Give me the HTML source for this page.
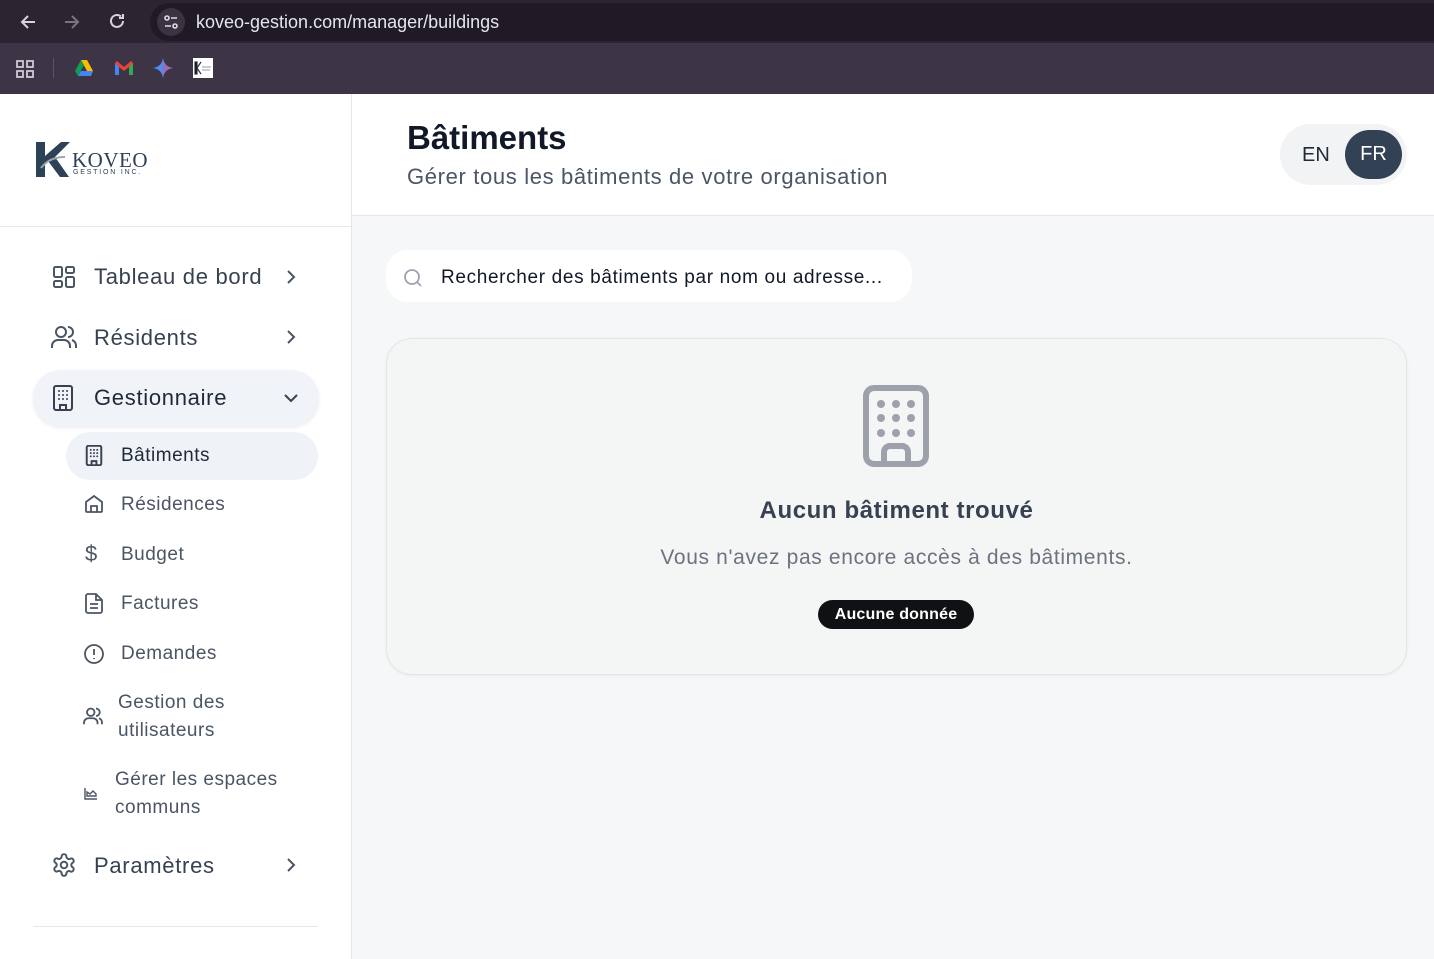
<!DOCTYPE html>
<html><head><meta charset="utf-8"><style>
*{box-sizing:border-box;margin:0;padding:0}
body{width:1434px;height:959px;overflow:hidden;font-family:"Liberation Sans",Arial,sans-serif;background:#f6f7f8;position:relative;letter-spacing:0.5px}
.abs{position:absolute}
.top{left:0;top:0;width:1434px;height:43px;background:#2b2431}
.bm{left:0;top:43px;width:1434px;height:51px;background:#3d3546}
.url{left:150px;top:3px;width:1300px;height:38px;border-radius:19px;background:#1f1a25;color:#e8e4ee;font-size:18px;line-height:38px;padding-left:46px;letter-spacing:0}
.side{left:0;top:94px;width:352px;height:865px;background:#fff;border-right:1px solid #e5e7eb}
.nav{color:#374151;font-size:22px;letter-spacing:0.7px}
.sub{color:#4b5563;font-size:19px}
svg{position:absolute}
</style></head><body>
<div class="abs top"></div>
<div class="abs bm"></div>
<svg style="left:18px;top:12px" width="20" height="20" viewBox="0 0 20 20" fill="none" stroke="#d8d2de" stroke-width="2"><path d="M17 10H4M10 4L4 10l6 6"/></svg>
<svg style="left:62px;top:12px" width="20" height="20" viewBox="0 0 20 20" fill="none" stroke="#7b7382" stroke-width="2"><path d="M3 10h13M10 4l6 6-6 6"/></svg>
<svg style="left:107px;top:11px" width="20" height="20" viewBox="0 0 20 20" fill="none" stroke="#d8d2de" stroke-width="2"><path d="M16 10a6 6 0 1 1-2-4.5M16 3v4h-4"/></svg>
<div class="abs url">koveo-gestion.com/manager/buildings</div>
<div class="abs" style="left:157px;top:8px;width:28px;height:28px;border-radius:14px;background:#3a3342"></div>
<svg style="left:162px;top:13px" width="18" height="18" viewBox="0 0 18 18" fill="none" stroke="#e0dae6" stroke-width="1.6"><circle cx="5" cy="5" r="2"/><path d="M9 5h6M3 13h6"/><circle cx="13" cy="13" r="2"/></svg>
<svg style="left:15px;top:59px" width="20" height="20" viewBox="0 0 20 20" fill="none" stroke="#cfc8d6" stroke-width="1.8"><rect x="2" y="2" width="6" height="6"/><rect x="12" y="2" width="6" height="6"/><rect x="2" y="12" width="6" height="6"/><rect x="12" y="12" width="6" height="6"/></svg>
<div class="abs" style="left:53px;top:58px;width:1px;height:20px;background:#5c5466"></div>
<svg style="left:74px;top:59px" width="20" height="18" viewBox="0 0 20 18"><path d="M7 1h6l6 11h-6z" fill="#fbbc04"/><path d="M7 1L1 12l3 5 6-11z" fill="#0f9d58"/><path d="M4 17h13l2-5H7z" fill="#4285f4"/></svg>
<svg style="left:114px;top:60px" width="20" height="16" viewBox="0 0 20 16"><path d="M1 3v12h4V7l5 4 5-4v8h4V3l-2-2-7 6-7-6z" fill="#ea4335"/><path d="M1 3v12h4V7z" fill="#4285f4"/><path d="M15 7v8h4V3z" fill="#34a853"/></svg>
<svg style="left:153px;top:58px" width="20" height="20" viewBox="0 0 20 20"><path d="M10 0C11 6 14 9 20 10 14 11 11 14 10 20 9 14 6 11 0 10 6 9 9 6 10 0z" fill="#4f8df5"/><path d="M10 0C11 6 14 9 20 10 14 11 11 14 10 20z" fill="#e94c6f" opacity=".5"/></svg>
<svg style="left:193px;top:58px" width="20" height="20" viewBox="0 0 20 20"><rect width="20" height="20" fill="#fff"/><path d="M2 4h2v12H2zM4 10l4-6M4 10l4 6" stroke="#334" stroke-width="1.2"/><path d="M9 9h9M9 12h8" stroke="#99a" stroke-width="1"/></svg>

<div class="abs side"></div>
<div class="abs" style="left:0;top:226px;width:351px;height:1px;background:#e5e7eb"></div>
<svg style="left:35px;top:140px" width="36" height="38" viewBox="0 0 36 38"><path d="M1 2h9v14L26 2h9L20 17l14 20h-9L13 21l-3 3v13H1z" fill="#2e4257"/><path d="M6 28c6-8 14-11 24-11" stroke="#9aa6b0" stroke-width="2" fill="none"/></svg>
<div class="abs" style="left:72px;top:148px;font-family:'Liberation Serif',serif;font-size:21px;color:#2e4257;letter-spacing:0.5px">KOVEO</div>
<div class="abs" style="left:73px;top:169px;font-size:7px;color:#2e4257;letter-spacing:1.8px">GESTION INC.</div>

<svg style="left:52px;top:265px" width="24" height="24" viewBox="0 0 24 24" fill="none" stroke="#4b5563" stroke-width="2"><rect x="2" y="2" width="8" height="10" rx="1.5"/><rect x="14" y="2" width="8" height="6" rx="1.5"/><rect x="14" y="12" width="8" height="10" rx="1.5"/><rect x="2" y="16" width="8" height="6" rx="1.5"/></svg>
<div class="abs nav" style="left:94px;top:264px">Tableau de bord</div>
<svg style="left:284px;top:269px" width="14" height="16" viewBox="0 0 14 16" fill="none" stroke="#4b5563" stroke-width="2"><path d="M4 2l6 6-6 6"/></svg>
<svg style="left:51px;top:325px" width="26" height="24" viewBox="0 0 26 24" fill="none" stroke="#4b5563" stroke-width="2"><circle cx="10" cy="7" r="5"/><path d="M1 23v-2a6 6 0 0 1 6-6h6a6 6 0 0 1 6 6v2M17 2a5 5 0 0 1 0 10M21 15a6 6 0 0 1 4 6v2"/></svg>
<div class="abs nav" style="left:94px;top:325px">Résidents</div>
<svg style="left:284px;top:329px" width="14" height="16" viewBox="0 0 14 16" fill="none" stroke="#4b5563" stroke-width="2"><path d="M4 2l6 6-6 6"/></svg>
<div class="abs" style="left:33px;top:370px;width:286px;height:57px;border-radius:28px;background:#f0f3f7;box-shadow:0 1px 3px rgba(0,0,0,.08)"></div>
<svg style="left:52px;top:385px" width="22" height="26" viewBox="0 0 22 26" fill="none" stroke="#374151" stroke-width="2"><rect x="2" y="1" width="18" height="24" rx="2"/><path d="M8 25v-5h6v5" /><g fill="#374151" stroke="none"><circle cx="7" cy="6" r="1"/><circle cx="11" cy="6" r="1"/><circle cx="15" cy="6" r="1"/><circle cx="7" cy="10" r="1"/><circle cx="11" cy="10" r="1"/><circle cx="15" cy="10" r="1"/><circle cx="7" cy="14" r="1"/><circle cx="11" cy="14" r="1"/><circle cx="15" cy="14" r="1"/></g></svg>
<div class="abs nav" style="left:94px;top:385px;color:#1f2937">Gestionnaire</div>
<svg style="left:283px;top:391px" width="16" height="14" viewBox="0 0 16 14" fill="none" stroke="#374151" stroke-width="2"><path d="M2 4l6 6 6-6"/></svg>
<div class="abs" style="left:66px;top:432px;width:252px;height:48px;border-radius:24px;background:#eff2f7"></div>
<svg style="left:85px;top:445px" width="18" height="21" viewBox="0 0 22 26" fill="none" stroke="#374151" stroke-width="2.4"><rect x="2" y="1" width="18" height="24" rx="2"/><path d="M8 25v-5h6v5"/><g fill="#374151" stroke="none"><circle cx="7" cy="6" r="1.2"/><circle cx="11" cy="6" r="1.2"/><circle cx="15" cy="6" r="1.2"/><circle cx="7" cy="10" r="1.2"/><circle cx="11" cy="10" r="1.2"/><circle cx="15" cy="10" r="1.2"/><circle cx="7" cy="14" r="1.2"/><circle cx="11" cy="14" r="1.2"/><circle cx="15" cy="14" r="1.2"/></g></svg>
<div class="abs sub" style="left:121px;top:445px;color:#1f2937">Bâtiments</div>
<svg style="left:84px;top:494px" width="20" height="20" viewBox="0 0 20 20" fill="none" stroke="#4b5563" stroke-width="1.8"><path d="M2 8l8-6 8 6v9a1 1 0 0 1-1 1H3a1 1 0 0 1-1-1z"/><path d="M7 18v-6h6v6"/></svg>
<div class="abs sub" style="left:121px;top:494px">Résidences</div>
<div class="abs" style="left:85px;top:541px;font-size:22px;color:#4b5563">$</div>
<div class="abs sub" style="left:121px;top:544px">Budget</div>
<svg style="left:85px;top:593px" width="18" height="21" viewBox="0 0 18 21" fill="none" stroke="#4b5563" stroke-width="1.8"><path d="M11 1H3a2 2 0 0 0-2 2v15a2 2 0 0 0 2 2h12a2 2 0 0 0 2-2V7z M11 1v6h6M5 11h8M5 15h8"/></svg>
<div class="abs sub" style="left:121px;top:593px">Factures</div>
<svg style="left:83px;top:643px" width="22" height="22" viewBox="0 0 22 22" fill="none" stroke="#4b5563" stroke-width="1.8"><circle cx="11" cy="11" r="9"/><path d="M11 6v6M11 15v1"/></svg>
<div class="abs sub" style="left:121px;top:643px">Demandes</div>
<svg style="left:83px;top:707px" width="20" height="18" viewBox="0 0 26 24" fill="none" stroke="#4b5563" stroke-width="2.4"><circle cx="10" cy="7" r="5"/><path d="M1 23v-2a6 6 0 0 1 6-6h6a6 6 0 0 1 6 6v2M17 2a5 5 0 0 1 0 10M21 15a6 6 0 0 1 4 6v2"/></svg>
<div class="abs sub" style="left:118px;top:689px;line-height:28px">Gestion des<br>utilisateurs</div>
<svg style="left:84px;top:787px" width="14" height="13" viewBox="0 0 14 13" fill="none" stroke="#4b5563" stroke-width="1.4"><path d="M1 1v11h12M3 9l0-4 3 2 3-3 3 3v2z"/></svg>
<div class="abs sub" style="left:115px;top:766px;line-height:28px">Gérer les espaces<br>communs</div>
<svg style="left:51px;top:852px" width="26" height="26" viewBox="0 0 24 24" fill="none" stroke="#4b5563" stroke-width="1.8"><circle cx="12" cy="12" r="3"/><path d="M12.2 2h-.4a2 2 0 0 0-2 2v.2a2 2 0 0 1-1 1.7l-.4.3a2 2 0 0 1-2 0l-.2-.1a2 2 0 0 0-2.7.7l-.2.4a2 2 0 0 0 .7 2.7l.2.1a2 2 0 0 1 1 1.7v.5a2 2 0 0 1-1 1.7l-.2.1a2 2 0 0 0-.7 2.7l.2.4a2 2 0 0 0 2.7.7l.2-.1a2 2 0 0 1 2 0l.4.3a2 2 0 0 1 1 1.7V20a2 2 0 0 0 2 2h.4a2 2 0 0 0 2-2v-.2a2 2 0 0 1 1-1.7l.4-.3a2 2 0 0 1 2 0l.2.1a2 2 0 0 0 2.7-.7l.2-.4a2 2 0 0 0-.7-2.7l-.2-.1a2 2 0 0 1-1-1.7v-.5a2 2 0 0 1 1-1.7l.2-.1a2 2 0 0 0 .7-2.7l-.2-.4a2 2 0 0 0-2.7-.7l-.2.1a2 2 0 0 1-2 0l-.4-.3a2 2 0 0 1-1-1.7V4a2 2 0 0 0-2-2z"/></svg>
<div class="abs nav" style="left:94px;top:853px">Paramètres</div>
<svg style="left:284px;top:857px" width="14" height="16" viewBox="0 0 14 16" fill="none" stroke="#4b5563" stroke-width="2"><path d="M4 2l6 6-6 6"/></svg>
<div class="abs" style="left:33px;top:926px;width:285px;height:1px;background:#e5e7eb"></div>

<div class="abs" style="left:352px;top:94px;width:1082px;height:122px;background:#fff;border-bottom:1px solid #e5e7eb"></div>
<div class="abs" style="left:407px;top:119px;font-size:33px;font-weight:bold;color:#111827;letter-spacing:0">Bâtiments</div>
<div class="abs" style="left:407px;top:164px;font-size:22px;color:#4b5563;letter-spacing:0.65px">Gérer tous les bâtiments de votre organisation</div>
<div class="abs" style="left:1280px;top:124px;width:127px;height:61px;border-radius:31px;background:#f1f3f5"></div>
<div class="abs" style="left:1302px;top:144px;font-size:20px;color:#1f2937;letter-spacing:0">EN</div>
<div class="abs" style="left:1345px;top:130px;width:57px;height:49px;border-radius:25px;background:#334155;color:#fff;font-size:20px;text-align:center;line-height:49px;letter-spacing:0">FR</div>

<div class="abs" style="left:386px;top:250px;width:526px;height:52px;border-radius:22px;background:#fff"></div>
<svg style="left:403px;top:268px" width="20" height="20" viewBox="0 0 20 20" fill="none" stroke="#9ca3af" stroke-width="1.8"><circle cx="9" cy="9" r="7"/><path d="M14 14l4 4"/></svg>
<div class="abs" style="left:441px;top:267px;font-size:19px;color:#111827;letter-spacing:0.65px">Rechercher des bâtiments par nom ou adresse...</div>

<div class="abs" style="left:386px;top:338px;width:1021px;height:337px;border-radius:26px;background:#f4f5f5;border:1px solid #e3e6e9;box-shadow:0 1px 3px rgba(0,0,0,.05)"></div>
<svg style="left:863px;top:385px" width="66" height="82" viewBox="0 0 66 82" fill="none" stroke="#9ca1ab" stroke-width="6"><rect x="3" y="3" width="60" height="76" rx="8"/><path d="M21 79V67a6 6 0 0 1 6-6h12a6 6 0 0 1 6 6v12"/><g fill="#9ca1ab" stroke="none"><circle cx="18" cy="19" r="4"/><circle cx="33" cy="19" r="4"/><circle cx="48" cy="19" r="4"/><circle cx="18" cy="33" r="4"/><circle cx="33" cy="33" r="4"/><circle cx="48" cy="33" r="4"/><circle cx="18" cy="48" r="4"/><circle cx="33" cy="48" r="4"/><circle cx="48" cy="48" r="4"/></g></svg>
<div class="abs" style="left:386px;top:497px;width:1021px;text-align:center;font-size:24px;font-weight:bold;color:#374151;letter-spacing:0.6px">Aucun bâtiment trouvé</div>
<div class="abs" style="left:386px;top:546px;width:1021px;text-align:center;font-size:21px;color:#6b7280;letter-spacing:0.65px">Vous n'avez pas encore accès à des bâtiments.</div>
<div class="abs" style="left:818px;top:600px;width:156px;height:29px;border-radius:15px;background:#0f1115;color:#fff;font-size:16px;font-weight:bold;text-align:center;line-height:30px;letter-spacing:0.2px">Aucune donnée</div>
</body></html>
